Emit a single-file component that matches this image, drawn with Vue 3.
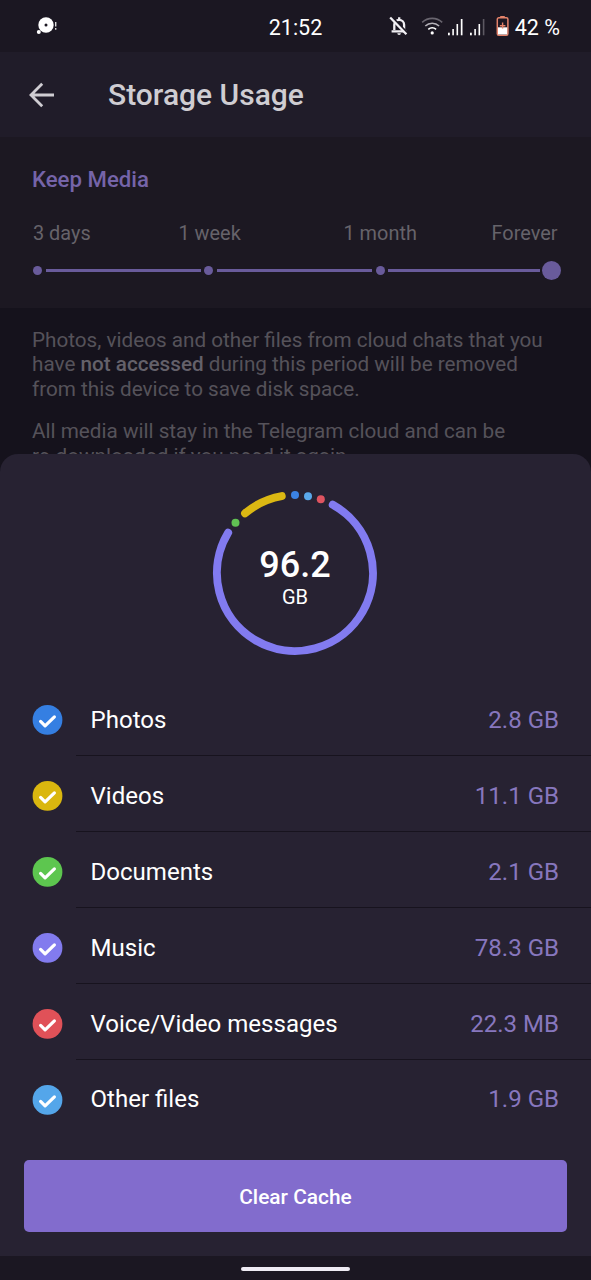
<script setup>
const periods = ['3 days', '1 week', '1 month', 'Forever']
const rows = [
  { label: 'Photos', size: '2.8 GB', tone: 'blue' },
  { label: 'Videos', size: '11.1 GB', tone: 'yellow' },
  { label: 'Documents', size: '2.1 GB', tone: 'green' },
  { label: 'Music', size: '78.3 GB', tone: 'violet' },
  { label: 'Voice/Video messages', size: '22.3 MB', tone: 'red' },
  { label: 'Other files', size: '1.9 GB', tone: 'sky' },
]
</script>

<template>
  <div class="screen">
    <header class="status">
      <svg class="notif" width="22" height="20" viewBox="0 0 22 20">
        <circle cx="10" cy="8" r="7.7" fill="#fff" />
        <circle cx="2.8" cy="15" r="2" fill="#fff" />
        <circle cx="10" cy="8" r="1.5" fill="#1b1722" />
        <path d="M19.7 5v4.5M19.7 11v1.8" stroke="#ddd" stroke-width="1.4" />
      </svg>
      <span class="clock">21:52</span>
      <div class="tray">
        <svg width="110" height="24" viewBox="0 0 110 24">
          <g fill="none" stroke="#f2f0f4" stroke-width="2.3">
            <path d="M5.3 16V10.8a4.9 4.9 0 0 1 9.8 0V16M2.6 17.3h14.8M10.2 5.5V3.3" />
            <path d="M2.5 3.2l16 16.4" stroke="#1b1722" stroke-width="3" />
            <path d="M1.2 3.5l16.2 16.8" stroke-width="2.3" />
          </g>
          <path d="M8.3 19.3h3.6a1.8 1.8 0 0 1-3.6 0z" fill="#f2f0f4" />
          <g fill="none" stroke-width="1.6">
            <path d="M33.2 8.4a14.5 14.5 0 0 1 20 0" stroke="#69656f" />
            <path d="M36.3 12a10 10 0 0 1 13.8 0" stroke="#b5b2b9" />
            <path d="M39.3 15.3a6 6 0 0 1 7.8 0" stroke="#fff" />
          </g>
          <circle cx="43.2" cy="18.9" r="1.6" fill="#fff" />
          <g fill="#fff">
            <rect x="59" y="18.7" width="1.8" height="2.6" />
            <rect x="63.3" y="15" width="1.6" height="6.3" />
            <rect x="67.5" y="10" width="1.6" height="11.3" />
            <rect x="71.8" y="5" width="1.7" height="16.3" />
            <rect x="81" y="18.7" width="1.8" height="2.6" />
            <rect x="85.3" y="15" width="1.6" height="6.3" />
            <rect x="89.5" y="10" width="1.6" height="11.3" />
            <rect x="93.8" y="5" width="1.6" height="16.3" fill="#5d5962" />
          </g>
        </svg>
        <svg class="battery" width="14" height="22" viewBox="0 0 14 22">
          <path d="M4.2 1h4.6v2H4.2z" fill="#e4826a" />
          <rect x="1.3" y="2.8" width="10.6" height="17.4" rx="1.5" fill="none" stroke="#e4826a" stroke-width="1.5" />
          <rect x="2" y="12.3" width="9.2" height="7.2" fill="#fff" />
          <path d="M6.6 7.5v6M3.8 10.8h5.6" stroke="#e4826a" stroke-width="1.4" />
        </svg>
        <span class="percent">42 %</span>
      </div>
    </header>

    <div class="bar">
      <svg width="26" height="26" viewBox="0 0 26 26" fill="none" stroke="#cfcdd2" stroke-width="2.8">
        <path d="M25 13H3M13.2 1.8L2 13l11.2 11.2" />
      </svg>
      <h1>Storage Usage</h1>
    </div>

    <section class="keep">
      <h2>Keep Media</h2>
      <div class="periods">
        <span v-for="p in periods" :key="p">{{ p }}</span>
      </div>
      <div class="slider">
        <i class="dot"></i><i class="line"></i>
        <i class="dot"></i><i class="line"></i>
        <i class="dot"></i><i class="line last"></i>
        <i class="knob"></i>
      </div>
    </section>

    <section class="info">
      <p>Photos, videos and other files from cloud chats that you<br />have <b>not accessed</b> during this period will be removed<br />from this device to save disk space.</p>
      <p>All media will stay in the Telegram cloud and can be<br />re-downloaded if you need it again.</p>
    </section>

    <main class="sheet">
      <div class="ring">
        <svg width="170" height="170" viewBox="210 488 170 170" fill="none" stroke-width="8" stroke-linecap="round">
          <path d="M332.8 504.8A78 78 0 1 1 228.1 532.8" stroke="#827bf0" />
          <path d="M245.1 513.3A78 78 0 0 1 281.7 496.1" stroke="#dbb813" />
          <g stroke="none">
            <circle cx="235.5" cy="522.7" r="4" fill="#61c153" />
            <circle cx="295" cy="495" r="4" fill="#3b82e4" />
            <circle cx="308" cy="496.2" r="4" fill="#5aa8ea" />
            <circle cx="320.8" cy="499.3" r="4" fill="#df5460" />
          </g>
        </svg>
        <div class="total">
          <strong>96.2</strong>
          <span>GB</span>
        </div>
      </div>

      <ul>
        <li v-for="r in rows" :key="r.label">
          <svg class="check" :class="r.tone" width="31" height="30" viewBox="0 0 31 30">
            <circle cx="15.5" cy="14.9" r="14.9" fill="currentColor" />
            <path d="M8.6 16.4l4.5 4.5 9.3-9" fill="none" stroke="#fff" stroke-width="3.2" stroke-linecap="round" stroke-linejoin="round" />
          </svg>
          <div class="cell">
            <span>{{ r.label }}</span>
            <span class="size">{{ r.size }}</span>
          </div>
        </li>
      </ul>

      <button type="button"><span>Clear Cache</span></button>
    </main>

    <footer class="nav"><i></i></footer>
  </div>
</template>

<style>
body { background: #15121c; }
</style>

<style scoped>
.screen {
  width: 591px;
  height: 1280px;
  display: flex;
  flex-direction: column;
  overflow: hidden;
  background: #15121c;
  font-family: Roboto, "Liberation Sans", sans-serif;
}
h1, h2, p, ul { margin: 0; padding: 0; font-weight: 400; }
.status {
  flex: none;
  height: 52px;
  box-sizing: border-box;
  padding: 0 31px 0 36px;
  background: #1b1722;
  color: #fff;
  display: grid;
  grid-template-columns: 1fr auto 1fr;
  align-items: center;
  font-size: 21.5px;
}
.notif { margin-top: 1px; }
.clock { line-height: 26px; margin-top: 3px; margin-right: 5px; }
.tray { justify-self: end; display: flex; align-items: center; }
.battery { margin: 0 5px 0 -3px; }
.percent { line-height: 26px; margin-top: 3px; white-space: nowrap; }
.bar {
  flex: none;
  height: 85px;
  box-sizing: border-box;
  padding-left: 29px;
  background: #201c29;
  display: flex;
  align-items: center;
  gap: 53px;
}
h1 { font-size: 30px; font-weight: 500; color: #cfcdd2; }
.keep {
  flex: none;
  height: 171px;
  box-sizing: border-box;
  padding: 29px 30px 0 32px;
  background: #1c1822;
}
h2 { font-size: 22.2px; line-height: 26px; font-weight: 500; color: #7564a9; }
.periods {
  margin-top: 30px;
  padding: 0 3.5px 0 1px;
  display: grid;
  grid-template-columns: 145.5px 165px 1fr auto;
  font-size: 19.9px;
  line-height: 24px;
  color: #66636a;
  white-space: nowrap;
}
.slider { margin-top: 14px; padding-left: 1px; height: 20px; display: flex; align-items: center; }
.dot { width: 9px; height: 9px; border-radius: 50%; background: #695b9b; }
.line { flex: 155; height: 3px; margin: 0 3.5px; background: #695b9b; }
.line.last { flex: 151; margin-right: 2.5px; }
.knob { width: 19px; height: 19px; border-radius: 50%; background: #695b9b; }
.info {
  flex: none;
  height: 146px;
  box-sizing: border-box;
  padding: 19.6px 0 0 32px;
  font-size: 20.7px;
  line-height: 24.5px;
  color: #55525a;
  white-space: nowrap;
}
.info b { font-weight: 500; color: #64616a; }
.info p + p { margin-top: 18px; }
.sheet {
  position: relative;
  flex: none;
  height: 802px;
  box-sizing: border-box;
  padding: 34px 0 0;
  background: #272232;
  border-radius: 18px 18px 0 0;
}
.ring { width: 170px; height: 170px; margin-left: 210px; display: grid; }
.ring svg, .total { grid-area: 1 / 1; }
.total { display: flex; flex-direction: column; align-items: center; color: #fff; padding-top: 55px; }
.total strong { font-size: 36px; line-height: 44px; font-weight: 500; }
.total span { font-size: 20px; line-height: 20px; }
ul { list-style: none; margin-top: 22px; }
li { height: 76px; display: flex; align-items: center; padding-left: 32px; }
.check { flex: none; margin-top: 4px; }
.cell {
  flex: 1;
  height: 76px;
  box-sizing: border-box;
  margin-left: 13px;
  padding: 4px 32px 0 14.5px;
  display: flex;
  align-items: center;
  justify-content: space-between;
  border-bottom: 1px solid #17131e;
  color: #fff;
  font-size: 24.05px;
}
li:last-child .cell { border-color: transparent; padding-top: 2px; }
.size { color: #8777be; }
.blue { color: #357fe2; }
.yellow { color: #dab70f; }
.green { color: #5dc64f; }
.violet { color: #827bee; }
.red { color: #e05158; }
.sky { color: #54a6ea; }
button {
  display: block;
  width: 543px;
  height: 72px;
  margin: 24px 0 0 24px;
  padding: 2px 0 0;
  border: 0;
  border-radius: 5px;
  background: #826ccd;
  color: #fff;
  font: 500 20.9px Roboto, "Liberation Sans", sans-serif;
}
.nav { flex: none; height: 24px; background: #1b1722; display: flex; justify-content: center; }
.nav i { width: 109px; height: 4px; margin-top: 11px; border-radius: 2px; background: #eeebf3; }
</style>
